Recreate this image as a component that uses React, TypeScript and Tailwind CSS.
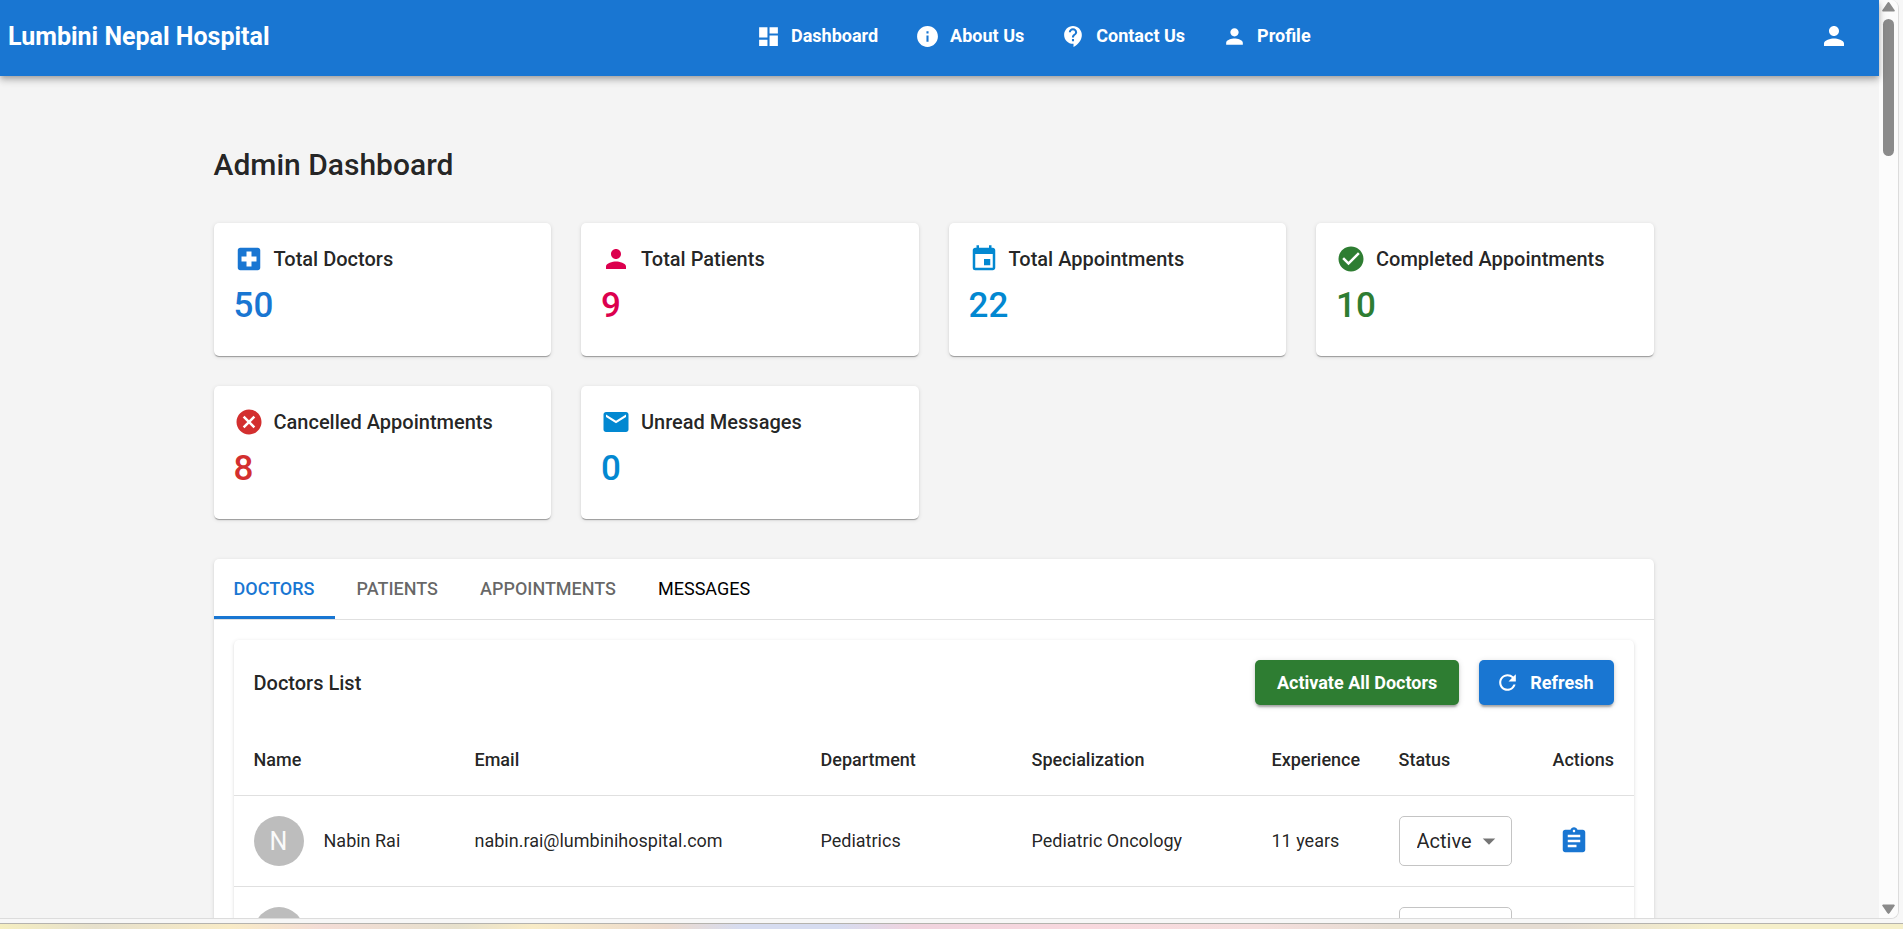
import type { ReactNode } from "react";
import {
  MdArrowDropDown,
  MdAssignment,
  MdCancel,
  MdCheckCircle,
  MdDashboard,
  MdEmail,
  MdEvent,
  MdInfo,
  MdLocalHospital,
  MdPerson,
  MdRefresh,
} from "react-icons/md";

function ContactSupportIcon() {
  return (
    <svg width="25" height="25" viewBox="0 0 24 24" fill="currentColor" aria-hidden="true">
      <path d="M11.5 2C6.81 2 3 5.81 3 10.5S6.81 19 11.5 19h.5v3c4.86-2.34 8-7 8-11.5C20 5.81 16.19 2 11.5 2zm1 14.5h-2v-2h2v2zm0-3.5h-2c0-3.25 3-3 3-5 0-1.1-.9-2-2-2s-2 .9-2 2h-2c0-2.21 1.79-4 4-4s4 1.79 4 4c0 2.5-3 2.75-3 5z" />
    </svg>
  );
}

const navItems: { label: string; icon: ReactNode }[] = [
  { label: "Dashboard", icon: <MdDashboard size={25} /> },
  { label: "About Us", icon: <MdInfo size={25} /> },
  { label: "Contact Us", icon: <ContactSupportIcon /> },
  { label: "Profile", icon: <MdPerson size={25} /> },
];

const stats: { label: string; value: number; color: string; icon: ReactNode }[] = [
  { label: "Total Doctors", value: 50, color: "text-[#1976d2]", icon: <MdLocalHospital size={30} /> },
  { label: "Total Patients", value: 9, color: "text-[#dc004e]", icon: <MdPerson size={30} /> },
  { label: "Total Appointments", value: 22, color: "text-[#0288d1]", icon: <MdEvent size={30} /> },
  { label: "Completed Appointments", value: 10, color: "text-[#2e7d32]", icon: <MdCheckCircle size={30} /> },
  { label: "Cancelled Appointments", value: 8, color: "text-[#d32f2f]", icon: <MdCancel size={30} /> },
  { label: "Unread Messages", value: 0, color: "text-[#0288d1]", icon: <MdEmail size={30} /> },
];

const tabs = [
  { label: "DOCTORS", style: "font-medium text-[#1976d2] border-[#1976d2]" },
  { label: "PATIENTS", style: "font-medium text-black/60 border-transparent" },
  { label: "APPOINTMENTS", style: "font-medium text-black/60 border-transparent" },
  { label: "MESSAGES", style: "font-normal text-black border-transparent" },
];

const columns = [
  { label: "Name", width: "w-[221px]" },
  { label: "Email", width: "w-[346px]" },
  { label: "Department", width: "w-[211px]" },
  { label: "Specialization", width: "w-[240px]" },
  { label: "Experience", width: "w-[127px]" },
  { label: "Status", width: "w-[154px]" },
  { label: "Actions", width: "w-[101px]" },
];

const doctors = [
  {
    name: "Nabin Rai",
    email: "nabin.rai@lumbinihospital.com",
    department: "Pediatrics",
    specialization: "Pediatric Oncology",
    experience: "11 years",
  },
  { name: "", email: "", department: "", specialization: "", experience: "" },
];

const cardShadow =
  "shadow-[0px_2px_1px_-1px_rgba(0,0,0,0.2),0px_1px_1px_0px_rgba(0,0,0,0.14),0px_1px_4px_0px_rgba(0,0,0,0.12)]";
const buttonShadow =
  "shadow-[0px_4px_2px_-2px_rgba(0,0,0,0.2),0px_2px_3px_0px_rgba(0,0,0,0.14),0px_1px_6px_0px_rgba(0,0,0,0.12)]";

function Header() {
  return (
    <header className="relative z-10 flex h-[76px] shrink-0 items-center bg-[#1976d2] pr-5 pb-1 pl-2 text-white shadow-[0px_2px_5px_-1px_rgba(0,0,0,0.2),0px_5px_6px_0px_rgba(0,0,0,0.14),0px_1px_12px_0px_rgba(0,0,0,0.12)]">
      <a href="#home" className="text-[25px] leading-[33px] font-bold whitespace-nowrap">
        Lumbini Nepal Hospital
      </a>
      <nav className="flex flex-1 justify-center gap-[37px]">
        {navItems.map((item) => (
          <a key={item.label} href="#nav" className="flex items-center gap-2.5 text-lg font-bold whitespace-nowrap">
            {item.icon}
            {item.label}
          </a>
        ))}
      </nav>
      <button type="button" aria-label="Account" className="ml-3 p-2.5">
        <MdPerson size={30} />
      </button>
    </header>
  );
}

function DoctorsPanel() {
  return (
    <section className={`m-5 rounded-[5px] bg-white ${cardShadow}`}>
      <div className="flex items-center gap-5 p-5">
        <h2 className="flex-1 text-xl font-medium">Doctors List</h2>
        <button
          type="button"
          className={`h-[45px] rounded-[5px] bg-[#2e7d32] px-[22px] text-lg font-bold text-white ${buttonShadow}`}
        >
          Activate All Doctors
        </button>
        <button
          type="button"
          className={`flex h-[45px] items-center gap-2.5 rounded-[5px] bg-[#1976d2] pr-5 pl-4 text-lg font-bold text-white ${buttonShadow}`}
        >
          <MdRefresh size={25} />
          Refresh
        </button>
      </div>
      <table className="w-full table-fixed border-collapse text-left text-lg">
        <thead>
          <tr className="h-[70px] border-b border-[#e0e0e0]">
            {columns.map((column) => (
              <th key={column.label} scope="col" className={`pl-5 font-medium ${column.width}`}>
                {column.label}
              </th>
            ))}
          </tr>
        </thead>
        <tbody className="leading-[30px]">
          {doctors.map((doctor, index) => (
            <tr key={index} className="h-[91px] border-b border-[#e0e0e0]">
              <td className="pl-5">
                <div className="flex items-center gap-5">
                  <span className="flex size-[50px] items-center justify-center rounded-full bg-[#bdbdbd] pt-0.5 text-[25px] leading-none text-[#fafafa]">
                    {doctor.name.charAt(0)}
                  </span>
                  {doctor.name}
                </div>
              </td>
              <td className="pl-5">{doctor.email}</td>
              <td className="pl-5">{doctor.department}</td>
              <td className="pl-5">{doctor.specialization}</td>
              <td className="pl-5">{doctor.experience}</td>
              <td className="pl-5">
                <div className="relative w-[113px]">
                  <select
                    aria-label="Status"
                    className="block h-[50px] w-full appearance-none rounded-[5px] border border-[#c4c4c4] bg-transparent pl-[17px] text-xl"
                  >
                    <option>Active</option>
                    <option>Inactive</option>
                  </select>
                  <MdArrowDropDown
                    size={30}
                    className="pointer-events-none absolute inset-y-0 right-2 my-auto text-black/54"
                  />
                </div>
              </td>
              <td className="pl-5">
                <button type="button" aria-label="View details" className="block p-1.5 text-[#1976d2]">
                  <MdAssignment size={30} />
                </button>
              </td>
            </tr>
          ))}
        </tbody>
      </table>
    </section>
  );
}

function ScrollTrack() {
  return (
    <div aria-hidden="true" className="flex w-[19px] shrink-0 flex-col items-center bg-[#fcfcfc] pt-0.5 pb-1">
      <svg width="13" height="10" viewBox="0 0 13 10" className="fill-[#8b8b8b]">
        <path d="M5.3.9a1.5 1.5 0 0 1 2.4 0l4.6 6.8A1 1 0 0 1 11.5 9.5h-10A1 1 0 0 1 .7 7.7z" />
      </svg>
      <div className="mt-[7px] h-[137px] w-[11px] rounded-full bg-[#8b8b8b]" />
      <svg width="13" height="10" viewBox="0 0 13 10" className="mt-auto fill-[#8b8b8b]">
        <path d="M5.3 9.1a1.5 1.5 0 0 0 2.4 0l4.6-6.8A1 1 0 0 0 11.5.5h-10A1 1 0 0 0 .7 2.3z" />
      </svg>
    </div>
  );
}

export default function App() {
  return (
    <div className="flex h-screen flex-col bg-[#f7f7f7] font-[Roboto,sans-serif] text-black/87">
      <div className="mr-1 flex min-h-0 flex-1 overflow-hidden rounded-r-lg border-r border-b border-[#dcdcdc] bg-[#f4f4f4]">
        <div className="flex min-w-0 flex-1 flex-col">
          <Header />
          <main className="min-h-0 flex-1 overflow-hidden pr-3">
            <div className="mx-auto max-w-[1500px] px-[30px] pt-[69px]">
              <h1 className="mb-[38px] text-3xl leading-10 font-medium">Admin Dashboard</h1>
              <div className="grid grid-cols-4 gap-[30px]">
                {stats.map((stat) => (
                  <article key={stat.label} className={`rounded-[5px] bg-white px-5 pt-5 pb-[30px] ${cardShadow}`}>
                    <div className="mb-2.5 flex items-center gap-2.5">
                      <span className={stat.color}>{stat.icon}</span>
                      <h2 className="text-xl leading-8 font-medium whitespace-nowrap">{stat.label}</h2>
                    </div>
                    <p className={`text-[35px] leading-[41px] font-medium ${stat.color}`}>{stat.value}</p>
                  </article>
                ))}
              </div>
              <div className={`mt-10 rounded-[5px] bg-white pb-px ${cardShadow}`}>
                <div role="tablist" className="flex gap-0.5 border-b border-[#e0e0e0]">
                  {tabs.map((tab, index) => (
                    <button
                      key={tab.label}
                      type="button"
                      role="tab"
                      aria-selected={index === 0}
                      className={`h-[60px] border-b-3 px-5 pt-[3px] text-lg ${tab.style}`}
                    >
                      {tab.label}
                    </button>
                  ))}
                </div>
                <DoctorsPanel />
              </div>
            </div>
          </main>
        </div>
        <ScrollTrack />
      </div>
      <div className="mt-1 h-1.5 shrink-0 border-t border-[#b5b3ae]">
        <div className="h-full bg-[linear-gradient(90deg,#f5eec0_0%,#e6e0cc_5%,#f8ebc6_12%,#f3dcd6_17%,#e6e0cc_24%,#f8ebc6_28%,#ecdacd_35%,#d6dcf0_39%,#d6dcf0_44%,#f0d3de_48%,#f8d8de_57%,#f5dedd_66%,#e5dcd2_73%,#e5dcd2_82%,#f5efca_90%,#f5efca_100%)]" />
      </div>
    </div>
  );
}
